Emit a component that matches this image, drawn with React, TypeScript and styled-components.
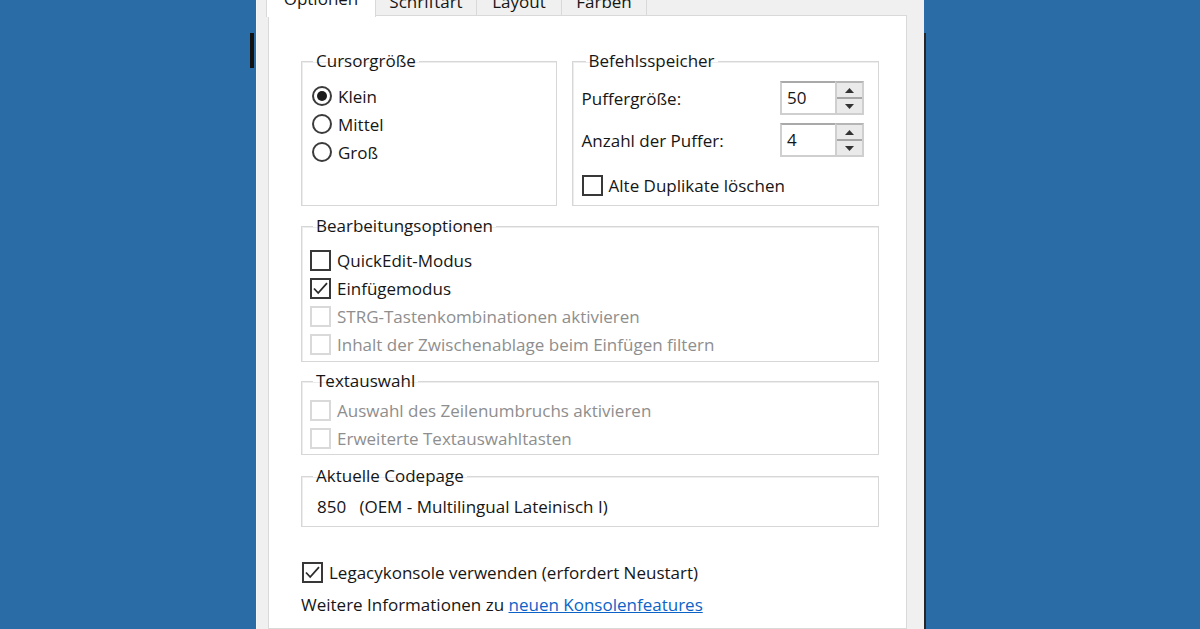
import React from "react";
import styled, { createGlobalStyle } from "styled-components";

const GlobalStyle = createGlobalStyle`
  html, body {
    margin: 0;
    padding: 0;
  }
  body {
    background: #2a6da6;
    font-family: "Open Sans", "Noto Sans", sans-serif;
    font-size: 17px;
    color: #161616;
    overflow: hidden;
  }
`;

const Desktop = styled.div`
  display: flex;
  height: 629px;
  overflow: hidden;
`;

const Backdrop = styled.div`
  width: 256px;
  display: flex;
  justify-content: flex-end;
  padding-right: 2px;
  box-sizing: border-box;
`;

const ConsoleEdge = styled.div`
  width: 4px;
  height: 35px;
  margin-top: 33px;
  background: #121212;
`;

const Dialog = styled.div`
  width: 668px;
  box-sizing: border-box;
  background: #f0f0f0;
  padding: 0 17px 0 11px;
  display: flex;
  flex-direction: column;
  border-left: 1px solid #f7f7f7;
`;

const DialogEdge = styled.div`
  width: 2px;
  margin-top: 33px;
  background: #262626;
`;

const TabStrip = styled.div`
  display: flex;
  align-items: flex-end;
  height: 28px;
  margin-top: -12px;
  margin-left: -2px;
  position: relative;
  z-index: 1;
`;

const Tab = styled.div<{ $active?: boolean; $width: number }>`
  width: ${({ $width }) => $width}px;
  box-sizing: border-box;
  height: ${({ $active }) => ($active ? 31 : 28)}px;
  margin-bottom: ${({ $active }) => ($active ? -1 : 0)}px;
  display: flex;
  align-items: flex-end;
  justify-content: center;
  line-height: 16px;
  padding-bottom: ${({ $active }) => ($active ? 10 : 5)}px;
  background: ${({ $active }) => ($active ? "#fff" : "#f0f0f0")};
  border: 1px solid #d9d9d9;
  border-bottom: ${({ $active }) => ($active ? "none" : "1px solid #d9d9d9")};
  margin-left: ${({ $active }) => ($active ? 0 : -1)}px;
  color: #161616;
`;

const Panel = styled.div`
  flex: 1;
  background: #fff;
  border: 1px solid #d9d9d9;
  margin-top: -1px;
  padding: 35px 27px 0 32px;
  display: flex;
  flex-direction: column;
`;

const TopRow = styled.div`
  display: flex;
  gap: 15px;
`;

const Group = styled.fieldset<{ $width?: number; $mt?: number }>`
  margin: ${({ $mt }) => $mt ?? 0}px 0 0 0;
  padding: 0;
  min-width: 0;
  box-sizing: border-box;
  ${({ $width }) => ($width ? `width: ${$width}px;` : "")}
  border: 1px solid #d7d7d7;
  box-shadow: inset 1px 1px 0 #ededed;
`;

const Legend = styled.legend<{ $indent?: number }>`
  margin-left: ${({ $indent }) => $indent ?? 11}px;
  padding: 0 3px;
  line-height: 20px;
  color: #161616;
`;

const GroupBody = styled.div<{ $pt: number; $pb: number; $pl: number; $pr?: number }>`
  padding: ${({ $pt, $pr, $pb, $pl }) => `${$pt}px ${$pr ?? 0}px ${$pb}px ${$pl}px`};
  display: flex;
  flex-direction: column;
`;

const OptionRow = styled.label<{ $disabled?: boolean; $mt?: number }>`
  display: flex;
  align-items: center;
  gap: 6px;
  height: 28px;
  margin-top: ${({ $mt }) => $mt ?? 0}px;
  color: ${({ $disabled }) => ($disabled ? "#8e8e8e" : "#161616")};
  white-space: nowrap;
`;

const RadioCircle = styled.span<{ $checked?: boolean }>`
  width: 20px;
  height: 20px;
  box-sizing: border-box;
  border-radius: 50%;
  border: 2px solid #3b3b3b;
  display: flex;
  align-items: center;
  justify-content: center;
  flex-shrink: 0;

  &::after {
    content: "";
    width: 10px;
    height: 10px;
    border-radius: 50%;
    background: ${({ $checked }) => ($checked ? "#1c1c1c" : "transparent")};
  }
`;

const CheckBox = styled.span<{ $disabled?: boolean }>`
  width: 21px;
  height: 21px;
  box-sizing: border-box;
  border: 2px solid ${({ $disabled }) => ($disabled ? "#d9d9d9" : "#383838")};
  background: #fff;
  display: flex;
  align-items: center;
  justify-content: center;
  flex-shrink: 0;
`;

const SpinRow = styled.div<{ $mt?: number }>`
  display: flex;
  align-items: center;
  justify-content: space-between;
  height: 34px;
  margin-top: ${({ $mt }) => $mt ?? 0}px;
`;

const Spinner = styled.div`
  display: flex;
  height: 34px;
`;

const SpinField = styled.div`
  width: 55px;
  box-sizing: border-box;
  border: 2px solid #cfcfcf;
  border-top-color: #a9a9a9;
  border-right: none;
  padding-left: 5px;
  line-height: 30px;
  background: #fff;
`;

const SpinButtons = styled.div`
  width: 29px;
  box-sizing: border-box;
  display: flex;
  flex-direction: column;
  border: 2px solid #cfcfcf;
  border-top-color: #b5b5b5;
  background: #eaeaea;
`;

const SpinButton = styled.div`
  flex: 1;
  display: flex;
  align-items: center;
  justify-content: center;

  & + & {
    border-top: 2px solid #a6a6a6;
  }
`;

const CodepageText = styled.div`
  height: 28px;
  line-height: 28px;
  white-space: pre;
`;

const LegacyRow = styled(OptionRow)`
  margin-left: 1px;
`;

const InfoLine = styled.div`
  height: 28px;
  line-height: 28px;
  margin-top: 5px;
  white-space: nowrap;
`;

const Link = styled.a`
  color: #0b63c8;
  text-decoration: underline;
`;

const CheckMark = () => (
  <svg width="15" height="13" viewBox="0 0 15 13">
    <path d="M1 6.5 L5.2 11 L14 1.2" fill="none" stroke="#2b2b2b" strokeWidth="1.8" />
  </svg>
);

const Arrow = ({ up }: { up?: boolean }) => (
  <svg width="9" height="5" viewBox="0 0 9 5">
    <polygon points={up ? "0,5 4.5,0 9,5" : "0,0 4.5,5 9,0"} fill="#333" />
  </svg>
);

const Check = ({ label, checked, disabled, mt }: { label: string; checked?: boolean; disabled?: boolean; mt?: number }) => (
  <OptionRow $disabled={disabled} $mt={mt}>
    <CheckBox $disabled={disabled}>{checked && <CheckMark />}</CheckBox>
    {label}
  </OptionRow>
);

const Radio = ({ label, checked }: { label: string; checked?: boolean }) => (
  <OptionRow>
    <RadioCircle $checked={checked} />
    {label}
  </OptionRow>
);

const NumberSpin = ({ value }: { value: string }) => (
  <Spinner>
    <SpinField>{value}</SpinField>
    <SpinButtons>
      <SpinButton>
        <Arrow up />
      </SpinButton>
      <SpinButton>
        <Arrow />
      </SpinButton>
    </SpinButtons>
  </Spinner>
);

export default function App() {
  return (
    <>
      <GlobalStyle />
      <Desktop>
        <Backdrop>
          <ConsoleEdge />
        </Backdrop>
        <Dialog>
          <TabStrip>
            <Tab $active $width={110}>Optionen</Tab>
            <Tab $width={102}>Schriftart</Tab>
            <Tab $width={86}>Layout</Tab>
            <Tab $width={86}>Farben</Tab>
          </TabStrip>
          <Panel>
            <TopRow>
              <Group $width={256}>
                <Legend>Cursorgröße</Legend>
                <GroupBody $pt={11} $pb={6} $pl={10}>
                  <Radio label="Klein" checked />
                  <Radio label="Mittel" />
                  <Radio label="Groß" />
                </GroupBody>
              </Group>
              <Group $width={308}>
                <Legend $indent={13}>Befehlsspeicher</Legend>
                <GroupBody $pt={10} $pb={6} $pl={9} $pr={14}>
                  <SpinRow>
                    Puffergröße:
                    <NumberSpin value="50" />
                  </SpinRow>
                  <SpinRow $mt={8}>
                    Anzahl der Puffer:
                    <NumberSpin value="4" />
                  </SpinRow>
                  <Check label="Alte Duplikate löschen" mt={14} />
                </GroupBody>
              </Group>
            </TopRow>

            <Group $mt={10}>
              <Legend>Bearbeitungsoptionen</Legend>
              <GroupBody $pt={10} $pb={3} $pl={8}>
                <Check label="QuickEdit-Modus" />
                <Check label="Einfügemodus" checked />
                <Check label="STRG-Tastenkombinationen aktivieren" disabled />
                <Check label="Inhalt der Zwischenablage beim Einfügen filtern" disabled />
              </GroupBody>
            </Group>

            <Group $mt={9}>
              <Legend>Textauswahl</Legend>
              <GroupBody $pt={5} $pb={2} $pl={8}>
                <Check label="Auswahl des Zeilenumbruchs aktivieren" disabled />
                <Check label="Erweiterte Textauswahltasten" disabled />
              </GroupBody>
            </Group>

            <Group $mt={11}>
              <Legend>Aktuelle Codepage</Legend>
              <GroupBody $pt={7} $pb={5} $pl={15}>
                <CodepageText>850   (OEM - Multilingual Lateinisch I)</CodepageText>
              </GroupBody>
            </Group>

            <LegacyRow $mt={31}>
              <CheckBox>
                <CheckMark />
              </CheckBox>
              Legacykonsole verwenden (erfordert Neustart)
            </LegacyRow>
            <InfoLine>
              Weitere Informationen zu <Link href="#">neuen Konsolenfeatures</Link>
            </InfoLine>
          </Panel>
        </Dialog>
        <DialogEdge />
      </Desktop>
    </>
  );
}
